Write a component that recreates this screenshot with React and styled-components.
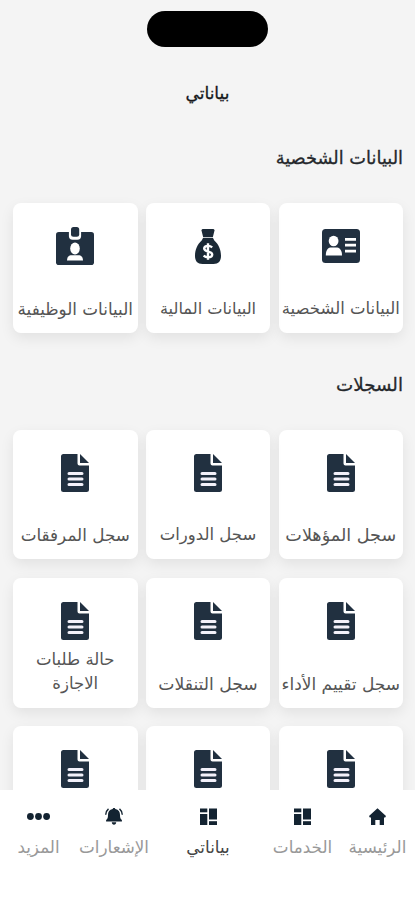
import React from 'react';
import styled, { createGlobalStyle } from 'styled-components';

const GlobalStyle = createGlobalStyle`
  * {
    box-sizing: border-box;
  }

  body {
    margin: 0;
    background: #f4f4f4;
    font-family: 'DejaVu Sans', sans-serif;
  }
`;

const personal = [
  { label: 'البيانات الشخصية', icon: 'card', size: 16.5 },
  { label: 'البيانات المالية', icon: 'money', size: 16.2 },
  { label: 'البيانات الوظيفية', icon: 'badge', size: 16.8 },
];

const records = [
  { label: 'سجل المؤهلات', size: 17.6 },
  { label: 'سجل الدورات', size: 16.5 },
  { label: 'سجل المرفقات', size: 16.8 },
  { label: 'سجل تقييم الأداء', size: 17 },
  { label: 'سجل التنقلات', size: 17.2 },
  { label: 'حالة طلبات\nالاجازة', size: 16.5 },
  // Last row sits behind the tab bar
  { label: '' },
  { label: '' },
  { label: '' },
];

const tabs = [
  { label: 'الرئيسية', icon: 'home' },
  { label: 'الخدمات', icon: 'grid' },
  { label: 'بياناتي', icon: 'grid', active: true },
  { label: 'الإشعارات', icon: 'bell' },
  { label: 'المزيد', icon: 'more' },
];

const FileIcon = () => (
  <svg width="28" height="38" viewBox="0 0 28 38" fill="#213040">
    <path d="M2.500 0H16.500v9.500a2 2 0 0 0 2 2H28V35.500a2.500 2.500 0 0 1-2.500 2.500H2.500A2.500 2.500 0 0 1 0 35.500V2.500A2.500 2.500 0 0 1 2.500 0z" />
    <path d="M19 0l9 9h-9z" />
    <path d="M8 19.600h13M8 25.100h13M8 30.600h13" stroke="#f3f1fa" strokeWidth="3" strokeLinecap="round" />
  </svg>
);

const CardIcon = () => (
  <svg width="38" height="34" viewBox="0 0 38 34" fill="#213040">
    <rect width="38" height="34" rx="3.500" />
    <ellipse cx="11.600" cy="12" rx="4.900" ry="5.300" fill="#fff" />
    <path d="M3.800 26.500c0-5 1.700-7.300 4.500-8h7c2.800.7 4.700 3 4.700 8z" fill="#fff" />
    <path d="M23 10.300h11M23 16.200h11M23 22.100h11" stroke="#fff" strokeWidth="2.700" />
  </svg>
);

const MoneyIcon = () => (
  <svg width="26" height="35" viewBox="0 0 26 35" fill="#1b2936">
    <path d="M6.500 1.500c0-1 .7-1.500 1.700-1.500h9.600c1 0 1.700.5 1.700 1.500L17.800 8.300H8.200z" />
    <path d="M8 9h10l1.300 2.500C23.500 15 26 20.500 26 27c0 5-2.500 8-7.500 8h-11C2.500 35 0 32 0 27c0-6.500 2.500-12 6.700-15.500z" />
    <path d="M17.200 18.300c-1.200-1-2.700-1.400-4.200-1.400-2.200 0-3.800 1-3.800 2.700 0 4 8 2 8 5.800 0 1.800-1.800 2.800-4.200 2.800-1.800 0-3.200-.6-4.400-1.600M13 14.300v16.500" fill="none" stroke="#fff" strokeWidth="2.400" />
  </svg>
);

const BadgeIcon = () => (
  <svg width="38" height="38" viewBox="0 0 38 38" fill="#213040">
    <rect y="5" width="38" height="33" rx="2.800" />
    <path d="M12.900 4h12.200v5a3.700 3.700 0 0 1-3.700 3.700h-4.800a3.700 3.700 0 0 1-3.700-3.700z" fill="#fff" />
    <rect x="15" y="0" width="8.200" height="9.800" rx="2.500" />
    <ellipse cx="19" cy="21.500" rx="4.800" ry="5.900" fill="#fff" />
    <path d="M11 33.500c.3-4 1.800-5 4.500-5.200h7c2.700.2 4.200 1.200 4.500 5.200z" fill="#fff" />
  </svg>
);

const cardIcons = { card: CardIcon, money: MoneyIcon, badge: BadgeIcon, file: FileIcon };

const HomeIcon = () => (
  <svg width="17" height="17" viewBox="0 0 17 17" fill="#132331">
    <path d="M8.500.3L17 8l-.8 1.400H15V17h-4.300v-5H6.300v5H2V9.400H.8L0 8z" />
  </svg>
);

const GridIcon = () => (
  <svg width="17" height="17" viewBox="0 0 17 17" fill="#132331">
    <rect x="0" y="0.500" width="7.300" height="3.800" />
    <rect x="0" y="6" width="7.300" height="11" />
    <rect x="9" y="0.500" width="8" height="11" />
    <rect x="9" y="13.200" width="8" height="3.800" />
  </svg>
);

const BellIcon = () => (
  <svg width="18" height="17" viewBox="0 0 18 17" fill="#132331">
    <path d="M9 0c.8 0 1.300.4 1.300 1.100C13.600 1.600 15 4 15 7c0 3 .6 4 1.900 5v1.500H1.100V12C2.400 11 3 10 3 7c0-3 1.400-5.400 4.700-5.900C7.700.4 8.200 0 9 0zM6.800 14.300h4.400c0 1.600-.9 2.500-2.200 2.500s-2.200-.9-2.200-2.500z" />
    <path d="M3.500.9C1.800 2.300.8 4 .7 6.800M14.500.9c1.700 1.400 2.700 3.100 2.800 5.900" fill="none" stroke="#132331" strokeWidth="1.400" />
  </svg>
);

const MoreIcon = () => (
  <svg width="23" height="17" viewBox="0 0 23 17" fill="#132331">
    <circle cx="3.400" cy="8.500" r="3.400" />
    <circle cx="11.500" cy="8.500" r="3.400" />
    <circle cx="19.600" cy="8.500" r="3.400" />
  </svg>
);

const tabIcons = { home: HomeIcon, grid: GridIcon, bell: BellIcon, more: MoreIcon };

const RecordCard = ({ label, icon, size }) => {
  const Icon = cardIcons[icon];
  return (
    <Card>
      <IconBox>
        <Icon />
      </IconBox>
      <CardLabel $size={size}>{label}</CardLabel>
    </Card>
  );
};

const App = () => (
  <>
    <GlobalStyle />
    <Screen dir="rtl">
      <Island />
      <PageTitle>بياناتي</PageTitle>
      <Content>
        <SectionTitle $size={17.8}>البيانات الشخصية</SectionTitle>
        <CardGrid>
          {personal.map((item) => (
            <RecordCard key={item.label} label={item.label} icon={item.icon} size={item.size} />
          ))}
        </CardGrid>
        <SectionTitle $size={18.3}>السجلات</SectionTitle>
        <CardGrid>
          {records.map((item, index) => (
            <RecordCard key={index} label={item.label} icon="file" size={item.size} />
          ))}
        </CardGrid>
      </Content>
      <TabBar>
        {tabs.map((tab) => {
          const Icon = tabIcons[tab.icon];
          return (
            <Tab key={tab.label}>
              <Icon />
              <TabLabel $active={tab.active}>{tab.label}</TabLabel>
            </Tab>
          );
        })}
      </TabBar>
    </Screen>
  </>
);

export default App;

// Styled Components
const Screen = styled.div`
  width: 415px;
  height: 900px;
  overflow: hidden;
  display: flex;
  flex-direction: column;
  background: #f4f4f4;
`;

const Island = styled.div`
  flex: none;
  width: 121px;
  height: 36px;
  margin: 11px auto 0;
  border-radius: 18px;
  background: #000;
`;

const PageTitle = styled.h1`
  flex: none;
  margin: 31px 0 0;
  height: 30px;
  line-height: 31px;
  text-align: center;
  font-size: 17px;
  font-weight: 400;
  color: #16181c;
  -webkit-text-stroke: 0.3px #16181c;
`;

const Content = styled.main`
  flex: 1;
  min-height: 0;
  overflow: hidden;
  padding: 34px 12px 0 13px;
`;

const SectionTitle = styled.h2`
  margin: 0;
  height: 30px;
  line-height: 31px;
  font-size: ${(props) => props.$size}px;
  font-weight: 400;
  color: #25282c;
  -webkit-text-stroke: 0.3px #25282c;
`;

const CardGrid = styled.section`
  display: grid;
  grid-template-columns: repeat(3, 124.5px);
  justify-content: space-between;
  row-gap: 18.5px;
  margin: 31px 0 36px;
`;

const Card = styled.div`
  height: 129.7px;
  padding: 24px 0 12px;
  border-radius: 8px;
  background: #fff;
  box-shadow: 0 5px 14px rgba(0, 0, 0, 0.08);
  display: flex;
  flex-direction: column;
  align-items: center;
  justify-content: space-between;
`;

const IconBox = styled.div`
  height: 38px;
  display: flex;
  align-items: center;
`;

const CardLabel = styled.span`
  white-space: pre;
  line-height: 24px;
  text-align: center;
  font-size: ${(props) => props.$size || 16.5}px;
  color: #555;
`;

const TabBar = styled.nav`
  flex: none;
  height: 110px;
  padding-top: 18px;
  background: #fff;
  display: grid;
  grid-template-columns: 75px 75px 114px 74px 77px;
`;

const Tab = styled.div`
  display: flex;
  flex-direction: column;
  align-items: center;
  gap: 10px;
`;

const TabLabel = styled.span`
  line-height: 24px;
  white-space: nowrap;
  font-size: 16.8px;
  color: ${(props) => (props.$active ? '#444' : '#999')};
`;
